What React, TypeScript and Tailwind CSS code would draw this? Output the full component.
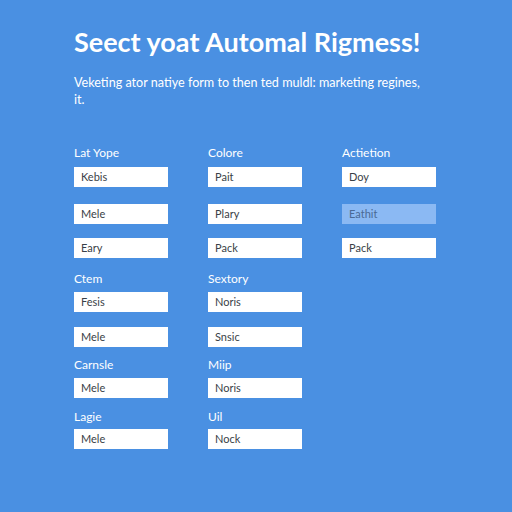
const font = { fontFamily: "Lato, 'Open Sans', sans-serif" };

type Cell = { label?: string; value?: string; active?: boolean } | null;

const Field: React.FC<{ value: string; active?: boolean }> = ({ value, active }) => (
  <div
    className={`h-[20px] w-[94px] flex items-center pl-[7px] text-[11px] ${
      active ? "bg-[#8bb9f3] text-[#4a6a95]" : "bg-white text-[#3a3f47]"
    }`}
  >
    {value}
  </div>
);

const Label: React.FC<{ text: string }> = ({ text }) => (
  <div className="h-[16px] leading-[16px] text-[12px] text-white">{text}</div>
);

// rows of the three-column form, top margin tuned per row
const rows: { mt: string; kind: "label" | "field"; cells: Cell[] }[] = [
  { mt: "mt-0", kind: "label", cells: [{ label: "Lat Yope" }, { label: "Colore" }, { label: "Actietion" }] },
  { mt: "mt-[6px]", kind: "field", cells: [{ value: "Kebis" }, { value: "Pait" }, { value: "Doy" }] },
  { mt: "mt-[17px]", kind: "field", cells: [{ value: "Mele" }, { value: "Plary" }, { value: "Eathit", active: true }] },
  { mt: "mt-[14px]", kind: "field", cells: [{ value: "Eary" }, { value: "Pack" }, { value: "Pack" }] },
  { mt: "mt-[13px]", kind: "label", cells: [{ label: "Ctem" }, { label: "Sextory" }, null] },
  { mt: "mt-[5px]", kind: "field", cells: [{ value: "Fesis" }, { value: "Noris" }, null] },
  { mt: "mt-[15px]", kind: "field", cells: [{ value: "Mele" }, { value: "Snsic" }, null] },
  { mt: "mt-[10px]", kind: "label", cells: [{ label: "Carnsle" }, { label: "Miip" }, null] },
  { mt: "mt-[5px]", kind: "field", cells: [{ value: "Mele" }, { value: "Noris" }, null] },
  { mt: "mt-[11px]", kind: "label", cells: [{ label: "Lagie" }, { label: "Uil" }, null] },
  { mt: "mt-[4px]", kind: "field", cells: [{ value: "Mele" }, { value: "Nock" }, null] },
];

export default function App() {
  return (
    <div className="w-[512px] h-[512px] bg-[#4a90e2] pl-[74px] pt-[26px]" style={font}>
      <h1 className="text-[27px] leading-[32px] font-bold text-white">
        Seect yoat Automal Rigmess!
      </h1>
      <p className="mt-[16px] text-[12.6px] leading-[17px] text-white w-[370px]">
        Veketing ator natiye form to then ted muldl: marketing regines,
        <br />
        it.
      </p>

      <div className="mt-[37px] flex flex-col">
        {rows.map((r, i) => (
          <div key={i} className={`grid grid-cols-[94px_94px_94px] gap-x-[40px] ${r.mt}`}>
            {r.cells.map((c, j) =>
              c === null ? (
                <div key={j} />
              ) : r.kind === "label" ? (
                <Label key={j} text={c.label!} />
              ) : (
                <Field key={j} value={c.value!} active={c.active} />
              )
            )}
          </div>
        ))}
      </div>
    </div>
  );
}
